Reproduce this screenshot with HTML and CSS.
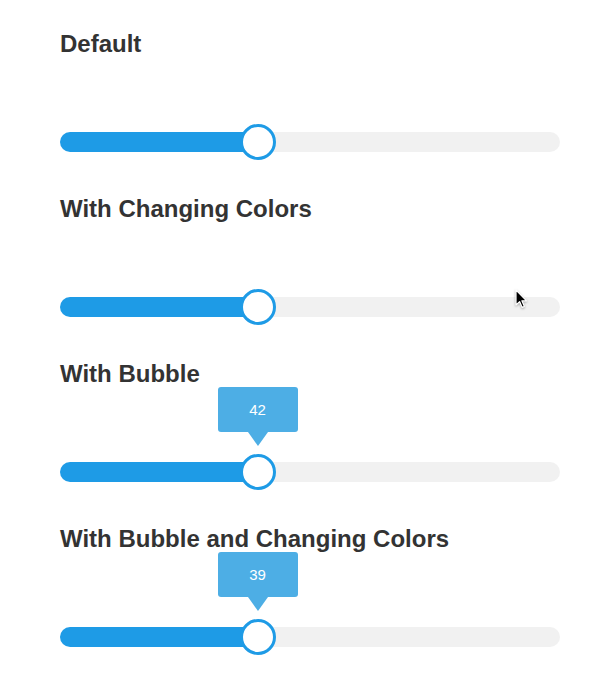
FILE: index.html
```html
<!DOCTYPE html>
<html lang="en">
<head>
  <meta charset="UTF-8" />
  <title>Range Sliders</title>
  <link rel="stylesheet" href="styles.css">
</head>
<body>
  <div class="demo">
    <section class="demo-item">
      <h2>Default</h2>
      <div class="slider">
        <input type="range" min="0" max="100" step="0.1" value="38.7" style="--fill: 39.5%" />
      </div>
    </section>

    <section class="demo-item">
      <h2>With Changing Colors</h2>
      <div class="slider">
        <input type="range" min="0" max="100" step="0.1" value="38.7" style="--fill: 39.5%" />
      </div>
    </section>

    <section class="demo-item">
      <h2>With Bubble</h2>
      <div class="slider">
        <output class="bubble" style="left: 157.5px">42</output>
        <input type="range" min="0" max="100" step="0.1" value="38.7" style="--fill: 39.5%" />
      </div>
    </section>

    <section class="demo-item">
      <h2>With Bubble and Changing Colors</h2>
      <div class="slider">
        <output class="bubble" style="left: 157.5px">39</output>
        <input type="range" min="0" max="100" step="0.1" value="38.7" style="--fill: 39.5%" />
      </div>
    </section>
  </div>

  <!-- mouse pointer -->
  <svg class="pointer" width="14" height="20" viewBox="0 0 14 20">
    <path d="M1 1 L1 16 L4.6 12.6 L7.2 18.4 L9.4 17.4 L6.9 11.8 L11.6 11.8 Z"
          fill="#000" stroke="#fff" stroke-width="1.2" stroke-linejoin="round" />
  </svg>
</body>
</html>
```

FILE: styles.css
```css
:root {
  --blue: #1e9be6;
  --bubble: #4daee5;
  --track: #f1f1f1;
  --text: #333;
}

body {
  margin: 0;
  background: #fff;
  color: var(--text);
  font-family: "Liberation Sans", Arial, Helvetica, sans-serif;
}

.demo {
  padding: 30px 60px 0;
  width: 500px;
}

.demo-item {
  margin-bottom: 35px;
}

.demo-item h2 {
  margin: 0;
  font-size: 24px;
  line-height: 28px;
  font-weight: bold;
}

.slider {
  position: relative;
  padding-top: 66px;
}

.slider input[type="range"] {
  -webkit-appearance: none;
  appearance: none;
  display: block;
  margin: 0;
  width: 500px;
  height: 36px;
  background: transparent;
}

.slider input[type="range"]::-webkit-slider-runnable-track {
  height: 20px;
  border-radius: 10px;
  background: linear-gradient(to right, var(--blue) var(--fill), var(--track) var(--fill));
}

.slider input[type="range"]::-webkit-slider-thumb {
  -webkit-appearance: none;
  box-sizing: border-box;
  width: 36px;
  height: 36px;
  margin-top: -8px;
  border: 3px solid var(--blue);
  border-radius: 50%;
  background: #fff;
}

.bubble {
  position: absolute;
  top: -1px;
  width: 80px;
  height: 45px;
  line-height: 45px;
  text-align: center;
  font-size: 15px;
  color: #fff;
  background: var(--bubble);
  border-radius: 3px;
}

.bubble::after {
  content: "";
  position: absolute;
  left: 30px;
  top: 45px;
  border-left: 10px solid transparent;
  border-right: 10px solid transparent;
  border-top: 14px solid var(--bubble);
}

.pointer {
  position: absolute;
  left: 515px;
  top: 289px;
  filter: drop-shadow(0 1px 1px rgba(0, 0, 0, 0.3));
}
```
